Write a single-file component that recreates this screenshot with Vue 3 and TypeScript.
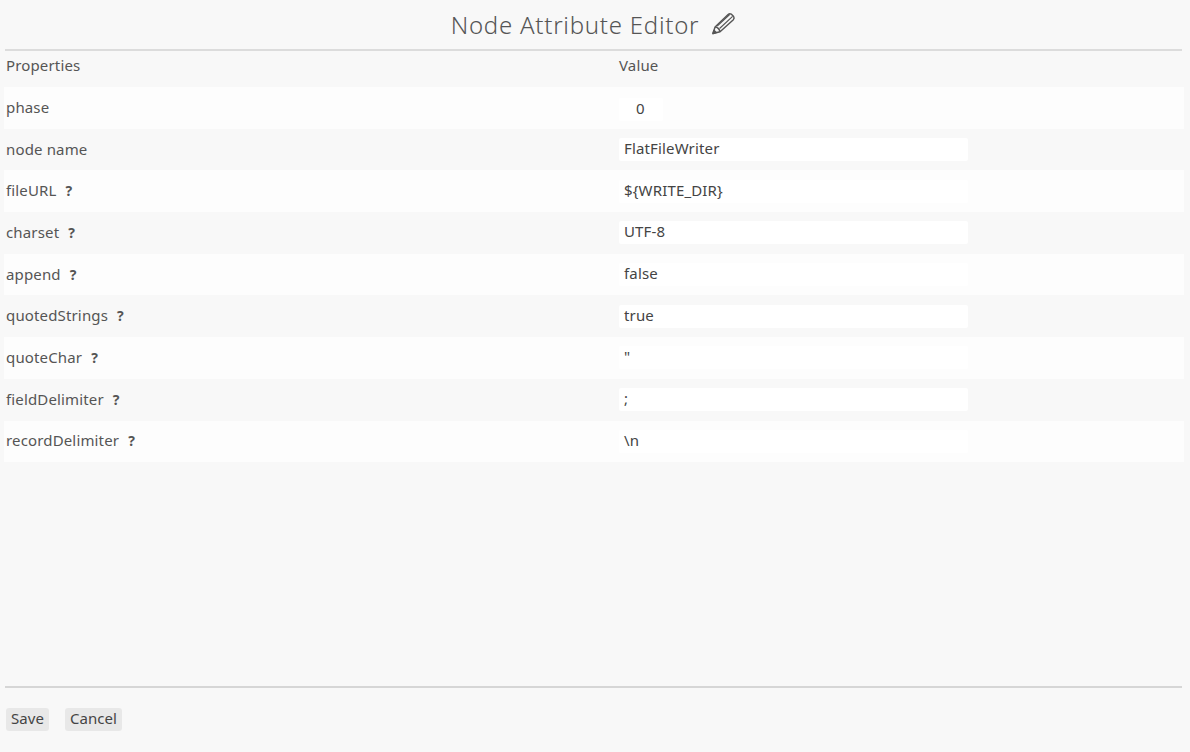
<script setup lang="ts">
interface Row { label: string; value: string; help: boolean; narrow?: boolean }
const rows: Row[] = [
  { label: 'phase', value: '0', help: false, narrow: true },
  { label: 'node name', value: 'FlatFileWriter', help: false },
  { label: 'fileURL', value: '${WRITE_DIR}', help: true },
  { label: 'charset', value: 'UTF-8', help: true },
  { label: 'append', value: 'false', help: true },
  { label: 'quotedStrings', value: 'true', help: true },
  { label: 'quoteChar', value: '"', help: true },
  { label: 'fieldDelimiter', value: ';', help: true },
  { label: 'recordDelimiter', value: '\\n', help: true },
]
</script>

<template>
  <div class="page">
    <header class="title">
      <h1>Node Attribute Editor</h1>
      <svg class="pencil" width="25" height="23" viewBox="0 0 26 24" fill="none" stroke="#555" stroke-width="1.5" stroke-linejoin="round">
        <path d="M2 22.5 L4.2 15.6 L17.8 2.6 Q19.4 1.2 21 2.2 L23.6 4.8 Q24.7 6.3 23.3 8 L9.4 20.6 Z" />
        <path d="M4.2 15.6 Q8.2 15.8 9.4 20.6" />
        <path d="M6.4 14.8 L19.4 2.6 M8.9 17.2 L22.5 4.6" stroke-width="1.2" />
        <path d="M2 22.5 L3 19.2 L5.4 21.4 Z" fill="#555" />
      </svg>
    </header>
    <div class="head-row">
      <span class="label-col">Properties</span>
      <span>Value</span>
    </div>
    <div class="rows">
      <div v-for="row in rows" :key="row.label" class="row">
        <div class="label-col">
          {{ row.label }}<b v-if="row.help" class="help">?</b>
        </div>
        <div class="field" :class="{ narrow: row.narrow }">{{ row.value }}</div>
      </div>
    </div>
    <footer class="footer">
      <button type="button">Save</button>
      <button type="button">Cancel</button>
    </footer>
  </div>
</template>

<style scoped>
.page {
  box-sizing: border-box;
  height: 752px;
  display: flex;
  flex-direction: column;
  background: #f8f8f8;
  color: #555;
  font-family: "Noto Sans", "Open Sans", sans-serif;
  font-size: 15px;
  letter-spacing: 0.15px;
  overflow: hidden;
}
.title {
  height: 49px;
  margin: 0 8px 0 5px;
  border-bottom: 2px solid #dcdcdc;
  box-sizing: content-box;
  display: flex;
  align-items: center;
  justify-content: center;
  gap: 12px;
}
h1 {
  margin: 0;
  font-size: 24px;
  font-weight: 300;
  letter-spacing: 0.75px;
  color: #555;
  padding-bottom: 1px;
}
.pencil { margin-top: -2px; }
.head-row {
  display: flex;
  height: 36px;
  align-items: center;
  padding: 0 0 9px 6px;
  box-sizing: border-box;
}
.label-col { width: 613px; flex: none; }
.rows { margin: 0 6px 0 4px; }
.row {
  display: flex;
  align-items: center;
  height: 41.7px;
  padding-left: 2px;
  box-sizing: border-box;
}
.row .label-col { padding-bottom: 2px; }
.row:nth-child(odd) { background: #fdfdfd; }
.help {
  margin-left: 9px;
  font-size: 14px;
  font-weight: 700;
}
.field {
  box-sizing: border-box;
  width: 349px;
  height: 23px;
  line-height: 21px;
  padding-left: 5px;
  background: #fff;
  border-radius: 2px;
  color: #444;
  white-space: nowrap;
}
.field.narrow {
  width: 44px;
  padding-left: 17px;
  margin-top: 4px;
}
.footer {
  margin: auto 8px 0 5px;
  border-top: 2px solid #d6d6d6;
  height: 66px;
  box-sizing: border-box;
  display: flex;
  gap: 16px;
  padding: 20px 0 0 1px;
  align-items: flex-start;
}
button {
  box-sizing: border-box;
  height: 23px;
  padding: 0 5px 2px;
  border: 0;
  border-radius: 3px;
  background: #e8e8e8;
  color: #444;
  font: inherit;
  letter-spacing: 0.05px;
  line-height: 19px;
}
</style>
